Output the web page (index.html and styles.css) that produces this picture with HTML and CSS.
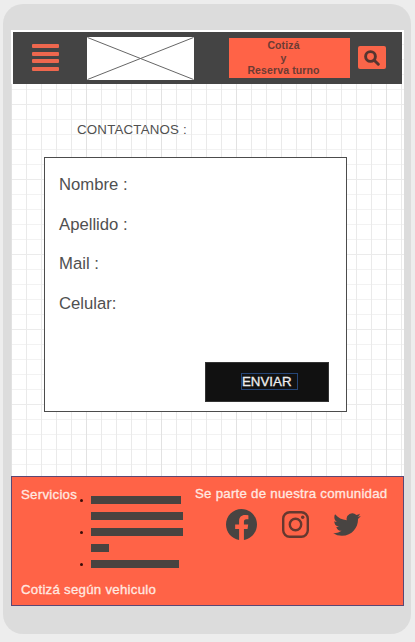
FILE: index.html
```html
<!DOCTYPE html>
<html lang="es">
<head>
<meta charset="utf-8">
<title>Contactanos</title>
<link rel="stylesheet" href="styles.css">
</head>
<body>
<div class="device">
  <div class="screen">
    <header class="topbar">
      <div class="menu"><i></i><i></i><i></i><i></i></div>
      <svg class="logo" viewBox="0 0 107 43"><path d="M0.5 0.5L106.500 42.500M106.500 0.500L0.500 42.500"/></svg>
      <div class="quote">Cotizá<br>y<br>Reserva turno</div>
      <div class="search"><svg viewBox="0 0 16 16"><circle cx="6.500" cy="6.500" r="4.900"/><path d="M10.200 10.200L14.300 14.300"/></svg></div>
    </header>
    <main class="content">
      <h1 class="title">CONTACTANOS :</h1>
      <form class="card">
        <div class="field">Nombre :</div>
        <div class="field">Apellido :</div>
        <div class="field">Mail :</div>
        <div class="field">Celular:</div>
        <div class="send"><span>ENVIAR</span></div>
      </form>
    </main>
    <footer class="footer">
      <div class="services">
        <div class="row">
          <span class="label">Servicios</span>
          <ul class="list">
            <li><b class="w90"></b><b class="w92"></b></li>
            <li><b class="w92"></b><b class="w18"></b></li>
            <li><b class="w88"></b></li>
          </ul>
        </div>
        <div class="label vehicle">Cotizá según vehiculo</div>
      </div>
      <div class="community">
        <div class="label">Se parte de nuestra comunidad</div>
        <div class="social">
          <svg class="facebook" viewBox="0 0 24 24"><path d="M24 12.073C24 5.405 18.627 0 12 0S0 5.405 0 12.073C0 18.100 4.388 23.094 10.125 24v-8.437H7.078v-3.490h3.047v-2.660c0-3.026 1.792-4.697 4.533-4.697 1.312 0 2.686.236 2.686.236v2.971h-1.513c-1.491 0-1.956.930-1.956 1.886v2.264h3.328l-.532 3.490h-2.796V24C19.612 23.094 24 18.100 24 12.073z"/></svg>
          <svg class="instagram" viewBox="0 0 27 27"><rect x="1.200" y="1.200" width="24.600" height="24.600" rx="6.500"/><circle cx="13.500" cy="13.500" r="5.700"/><circle class="dot" cx="20.700" cy="6.300" r="1.700"/></svg>
          <svg class="twitter" viewBox="0 0 24 20"><path d="M23.954 2.569a10 10 0 0 1-2.825.775 4.958 4.958 0 0 0 2.163-2.723c-.951.555-2.005.959-3.127 1.184a4.920 4.920 0 0 0-8.384 4.482C7.691 6.094 4.066 4.130 1.640 1.161a4.822 4.822 0 0 0-.666 2.475c0 1.710.870 3.213 2.188 4.096a4.904 4.904 0 0 1-2.228-.616v.061a4.923 4.923 0 0 0 3.946 4.827 4.996 4.996 0 0 1-2.212.085 4.937 4.937 0 0 0 4.604 3.417A9.868 9.868 0 0 1 0 17.540a13.995 13.995 0 0 0 7.557 2.209c9.054 0 13.999-7.496 13.999-13.986 0-.209 0-.420-.015-.630a9.936 9.936 0 0 0 2.460-2.548z"/></svg>
        </div>
      </div>
    </footer>
  </div>
</div>
</body>
</html>
```

FILE: styles.css
```css
* { box-sizing: border-box; }
body {
  margin: 0;
  height: 642px;
  padding: 4px 4px 8px 3px;
  background: #ededed;
  font-family: "Liberation Sans", Arial, sans-serif;
  color: #505050;
  overflow: hidden;
}
.device {
  height: 630px;
  padding: 26px 7px 28px 8px;
  border-radius: 20px;
  background: #dcdcdc;
}
.screen {
  height: 576px;
  display: flex;
  flex-direction: column;
  background-color: #fff;
  background-image:
    linear-gradient(90deg, #e2e2e2 1px, transparent 1px),
    linear-gradient(#ebebeb 1px, transparent 1px),
    linear-gradient(90deg, #eaeaea 1px, transparent 1px),
    linear-gradient(#f2f2f2 1px, transparent 1px);
  background-size: 75px 75px, 75px 75px, 15px 15px, 15px 15px;
  background-position: 0 0, 0 74px, 0 0, 0 14px;
}
.topbar {
  height: 54px;
  margin-right: 2px;
  padding: 5px 16px 0 19px;
  border: solid #fff;
  border-width: 2px 0 0 2px;
  background: #444;
  display: flex;
  align-items: flex-start;
}
.menu {
  width: 27px;
  margin: 7px 28px 0 0;
  display: grid;
  gap: 3.600px;
}
.menu i { height: 4px; border-radius: 1px; background: #ee674e; }
.logo { width: 107px; height: 43px; background: #fff; }
.logo path { stroke: #666; stroke-width: 1; fill: none; }
.quote {
  width: 121px;
  height: 40px;
  margin: 1px 8px 0 35px;
  padding: 1px 12px 0 0;
  background: #ff6347;
  color: #6c3b34;
  font-size: 10.500px;
  letter-spacing: .12px;
  line-height: 12.500px;
  font-weight: bold;
  text-align: center;
}
.search {
  width: 28px;
  height: 23px;
  margin-top: 9px;
  border-radius: 2px;
  background: #fa6549;
  display: grid;
  place-items: center;
}
.search svg { width: 16px; height: 16px; }
.search svg * { fill: none; stroke: #553530; stroke-width: 2.900; stroke-linecap: round; }
.content { height: 392px; padding: 37px 57px 0 33px; }
.title { margin: 0 0 18px 33px; font-size: 13.300px; letter-spacing: .2px; line-height: 18px; font-weight: normal; }
.card {
  height: 255px;
  padding: 7px 17px 0 14px;
  border: 1px solid #4c4c4c;
  background: #fff;
  display: flex;
  flex-direction: column;
}
.field { height: 39.500px; line-height: 39px; font-size: 16.700px; }
.send {
  width: 124px;
  height: 40px;
  margin: 39px 0 0;
  align-self: flex-end;
  padding: 10px 0 0 35px;
  border: 1px solid #333;
  background: #111;
}
.send span {
  display: block;
  width: 57px;
  height: 17px;
  border: 1px solid #254577;
  color: #eee;
  font-size: 13.300px;
  line-height: 15px;
  -webkit-text-stroke: .3px #eee;
}
.footer {
  height: 130px;
  width: 393px;
  border: 1px solid #5a4774;
  background: #ff6347;
  display: flex;
}
.services { width: 174px; padding: 10px 0 0 9px; }
.row { display: flex; height: 95px; }
.row .label { width: 70px; }
.label { color: #ffe9e1; font-size: 13.300px; letter-spacing: .24px; line-height: 16px; white-space: nowrap; -webkit-text-stroke: .3px #ffe9e1; }
.list { list-style: none; margin: 0; padding: 9px 0 0; }
.list li { position: relative; }
.list li::before {
  content: "";
  position: absolute;
  left: -11px;
  top: 3px;
  width: 3px;
  height: 3px;
  border-radius: 50%;
  background: #3a0d08;
}
.list b { display: block; height: 8px; margin-bottom: 8px; background: #494340; }
.w90 { width: 90px; }
.w92 { width: 92px; }
.w18 { width: 18px; }
.w88 { width: 88px; }
.community { padding: 9px 0 0 9px; }
.social { display: flex; align-items: flex-start; padding: 7px 0 0 31px; }
.social path { fill: #484442; }
.facebook { width: 31px; height: 31px; }
.instagram { width: 27px; height: 27px; margin: 2px 24px 0 25px; }
.instagram * { fill: none; stroke: #65382f; stroke-width: 2.400; }
.instagram .dot { fill: #65382f; stroke: none; }
.twitter { width: 28px; height: 23px; margin-top: 4px; }
```
